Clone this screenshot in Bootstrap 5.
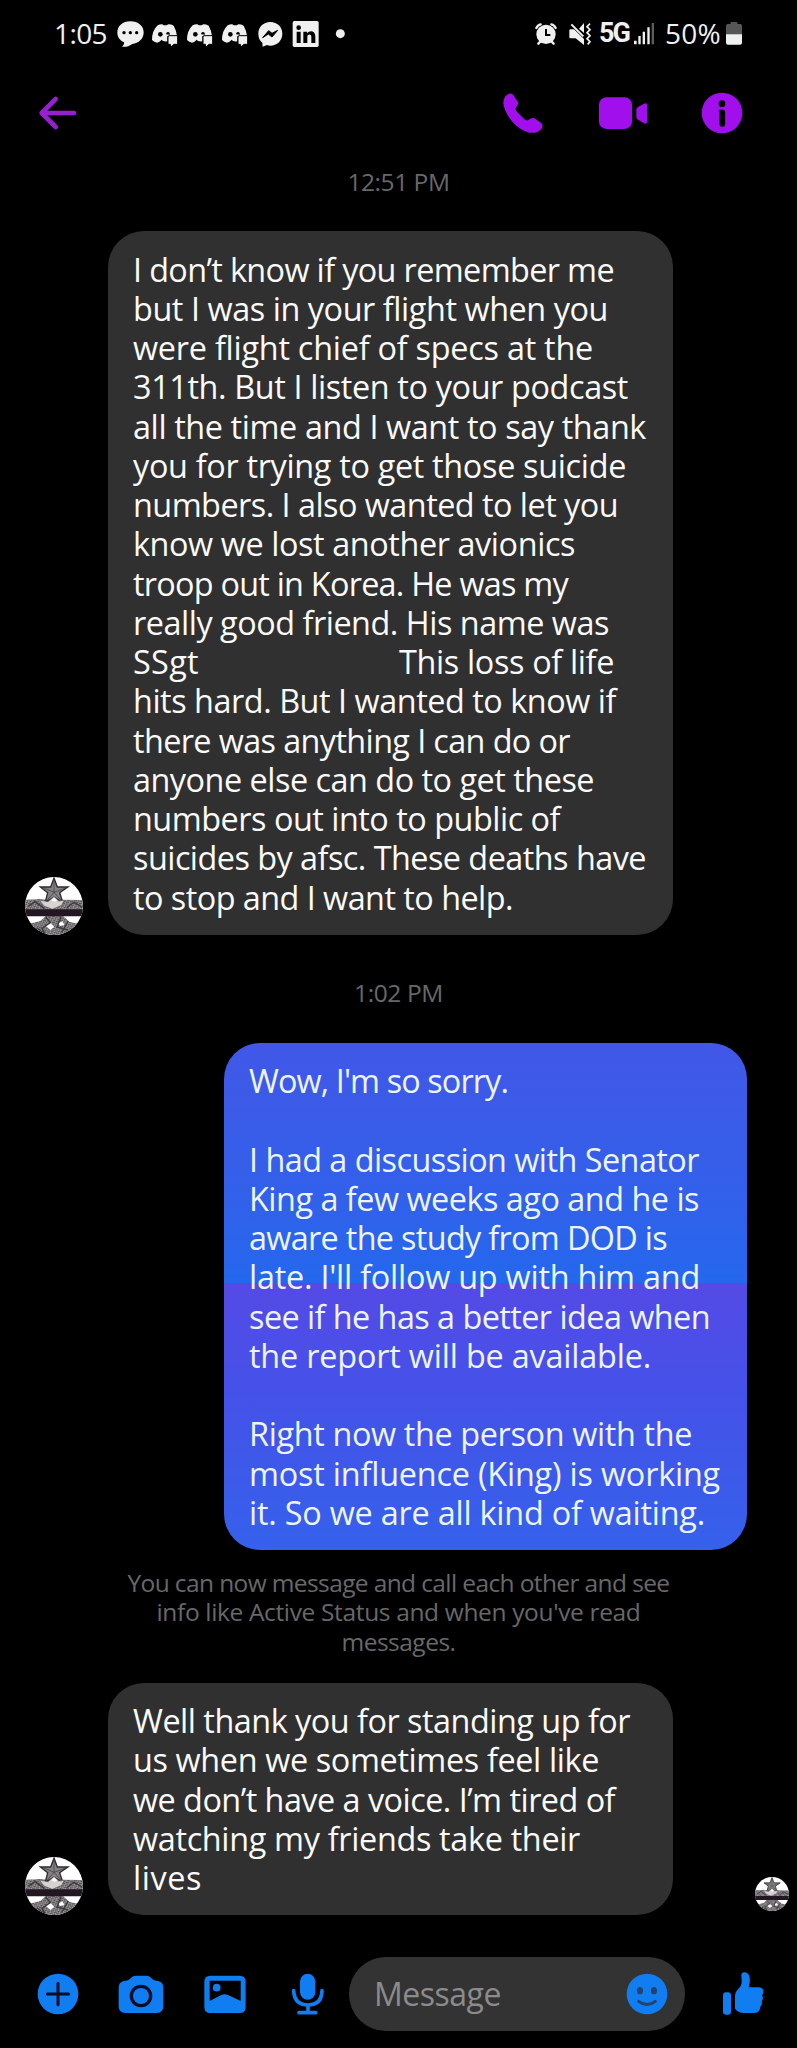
<!DOCTYPE html>
<html lang="en">
<head>
<meta charset="utf-8">
<meta name="viewport" content="width=device-width, initial-scale=1">
<title>Messages</title>
<link href="https://cdn.jsdelivr.net/npm/bootstrap@5.3.0/dist/css/bootstrap.min.css" rel="stylesheet">
<style>
body{background:#000;color:#fafafa;font-family:"Open Sans","Noto Sans",sans-serif;margin:0;overflow:hidden}
.phone{width:797px;height:2048px;overflow:hidden}
svg{display:block;overflow:visible;flex:none}
.ln{display:block;width:max-content;white-space:pre}
.statusbar{height:67px;padding-left:54px;font-size:28px;color:#f0f0f0;line-height:67px}
.statusbar .tray{margin-left:6px}
.net{font-family:Roboto,sans-serif;font-weight:700;font-size:27px}
.topbar{height:93px;padding:22px 51px 23px 34px}
.topbar .calls{gap:51.4px}
.ic{width:48px;height:48px}
.stamp{font-size:24.5px;line-height:29.4px;color:#686868}
.stamp .ln{margin:0 auto}
.t1{margin-top:7px;height:64px}
.bubble{border-radius:36px;padding:18.500px 25px 17.500px;font-size:32.4px;line-height:39.27px}
.theirs{width:564.5px;background:#303030}
.mine{width:523px;margin-left:224px;background:linear-gradient(#4157e7 0,#3161ea 32%,#2368ee 47.4%,#554ae6 47.4%,#4551e8 68%,#3561eb 100%);color:#ecf4ff}
.rowmsg{padding-left:25px}
.pic{width:58px;height:58px;margin-right:25px}
.seen{width:34px;height:34px;margin:0 8px 4px auto}
.redacted{display:inline-block;width:200px}
.t2{height:108px;padding-top:43px}
.note{height:133px;padding-top:18px}
.composer{height:74px;margin-top:42px;padding-left:34px}
.tools{gap:35.3px}
.field{width:336px;height:74px;border-radius:37px;background:#333;color:#8b8b8b;font-size:32px;margin-left:17px;padding:0 14px 0 25px}
.like{margin-left:34px}
</style>
</head>
<body>
<svg width="0" height="0" class="position-absolute">
<defs>
<clipPath id="disc"><circle cx="87" cy="87" r="87"/></clipPath>
<pattern id="hatch" width="9" height="8" patternUnits="userSpaceOnUse" patternTransform="rotate(28)"><rect width="9" height="8" fill="#a9a6a8"/><path d="M0 2h6M4 6h5" stroke="#353135" stroke-width="2.8"/></pattern>
<symbol id="avatar" viewBox="0 0 174 174"><g clip-path="url(#disc)">
<path fill="#fff" d="M0 0h174v174H0z"/>
<path fill="url(#hatch)" d="M0 68l50-2 20 4 36-2 68 1v30H0z"/>
<path fill="url(#hatch)" d="M62 117h52l20 18 40 8v31H0v-30l46-12z"/>
<path fill="#858285" stroke="#2e2b2e" stroke-width="4" d="M87 3l10 27 32 0-25 17 9 28-26-14-26 14 7-28-22-17 31 0z"/>
<path d="M87 6v40M57 33l30 13 36-13M66 70l21-24 22 24" fill="none" stroke="#3b383b" stroke-width="2"/>
<path fill="#d7d3d3" stroke="#5b585b" stroke-width="2" d="M43 69l26 5 18-15 14 13 17-2-8 15-28 12-25-10z"/>
<path fill="#fff" d="M79 70l8-9 10 9-8 4zM62 146l15-8 11 12-12 9zM101 138l12-5 5 11-14 3z"/>
<path d="M10 88l20-14 28 20M125 92l22-16 24 14M62 120l14 17-25 17 10 17M108 120l-12 30 33 9M130 132l-20 34M35 152l24 18" fill="none" stroke="#3b393b" stroke-width="4"/>
<path fill="#211621" d="M0 97h174v21H0z"/>
</g></symbol>
<symbol id="discord" viewBox="450 48 105 105" overflow="visible">
<path fill="#f0f0f0" d="M479 76q8-4 14-3l4 3h9l5-3q9 0 16 4 8 14 10 31h-29v16q-7 1-13-1l-4-4-3 3q-4 4-11 6-9-2-15-8 0-28 17-44z"/>
<circle cx="487" cy="103" r="7"/><path d="M504 103q1-8 7-7 5 1 5 8z"/>
<path fill="#f0f0f0" stroke="#000" stroke-width="3" d="M512 107h27v26h-11l-9 8-2-8h-7v-22z"/>
</symbol>
</defs>
</svg>
<div class="phone d-flex flex-column">
<header>
<div class="statusbar d-flex align-items-center">
<span class="ln" data-w="53">1:05</span>
<div class="tray d-flex">
<svg width="35" height="35" viewBox="342 48 105 105"><path fill="#f0f0f0" d="M394 64c24 0 40 14 40 33 0 20-15 33-34 35-11 8-20 9-31 8 5-4 7-8 6-13-12-6-20-16-20-29 0-20 16-34 39-34z"/><circle cx="375" cy="98" r="5"/><circle cx="394" cy="98" r="5"/><circle cx="413" cy="98" r="5"/></svg>
<svg width="35" height="35"><use href="#discord"/></svg>
<svg width="35" height="35"><use href="#discord"/></svg>
<svg width="35" height="35"><use href="#discord"/></svg>
<svg width="35" height="35" viewBox="761 48 105 105"><path fill="#f0f0f0" d="M813 66c21 0 36 15 36 35 0 21-16 36-36 36q-6 0-10-2l-13 5-1-12c-8-6-12-16-12-27 0-20 15-35 36-35z"/><path d="M790 113l18-21 10 8 17-9-17 20-11-9z" stroke="#000" stroke-width="3" stroke-linejoin="round"/></svg>
<svg width="35" height="35" viewBox="865 48 105 105"><rect x="879" y="63" width="78" height="78" rx="5" fill="#f0f0f0"/><circle cx="897" cy="83" r="7"/><path d="M891 95h12v34h-12zM911 95h11v5c9-11 25-7 25 9v20h-12v-18c0-10-12-9-12 0v18h-12z"/></svg>
<svg width="35" height="35" viewBox="974 48 105 105"><circle cx="1026" cy="101" r="13.5" fill="#f0f0f0"/></svg>
</div>
<svg width="24" height="24" viewBox="414 66 72 72" style="margin-left:176px"><circle cx="450" cy="103" r="29" fill="#f0f0f0"/><path d="M427 131l9-9M473 131l-9-9M421 84q4-9 13-11M479 84q-4-9-13-11" stroke="#f0f0f0" stroke-width="7" stroke-linecap="round" fill="none"/><path d="M450 87v18h13" stroke="#000" stroke-width="6" fill="none"/></svg>
<svg width="24" height="24" viewBox="514 66 72 72" style="margin-left:9.5px"><path fill="#f0f0f0" d="M518 91q0-3 4-3h10l30 29v18l-25-20h-15q-4 0-4-4zM547 86l15-17v30z"/><path d="M524 73l36 36" stroke="#f0f0f0" stroke-width="6"/><path d="M580 71l-9 9 9 9-9 9 9 9-9 9 9 9-7 8" stroke="#f0f0f0" stroke-width="5" fill="none"/></svg>
<span class="ln net" data-w="30" style="margin-left:7.5px">5G</span>
<svg width="20" height="22" viewBox="717 69 60 66" style="margin-left:5px"><path fill="#f0f0f0" d="M717 122h8v11h-8zM730 108h7v25h-7zM743 95h7v38h-7zM757 82h7v51h-7z"/><path fill="#5c5c5c" d="M770 69h7v64h-7z"/></svg>
<span class="ln" data-w="56" style="margin-left:11px">50%</span>
<svg width="16" height="23" viewBox="993 68 48 69" style="margin-left:5px"><path fill="#565656" d="M1007 68h20v6h9q5 0 5 5v27h-48V79q0-5 5-5h9z"/><path fill="#f0f0f0" d="M993 105h48v25q0 6-6 6h-36q-6 0-6-6z"/></svg>
</div>
<div class="topbar d-flex justify-content-between">
<svg class="ic" viewBox="103 268 144 144"><path d="M223 340h-95M168 298l-42 42 42 42" fill="none" stroke="#9420cf" stroke-width="14" stroke-linecap="round" stroke-linejoin="round"/></svg>
<div class="calls d-flex" >
<svg class="ic" viewBox="307 268 144 144"><path fill="#a10fed" d="M327 289q9-11 20-6l17 24q2 6-5 15-5 7 2 14l22 23q7 6 13 1 10-8 18-4l20 15q6 6 1 16-13 15-37 12-26-6-51-33-23-28-27-54-1-14 7-23z"/></svg>
<svg class="ic" viewBox="605 268 144 144"><rect x="605" y="293" width="99" height="95" rx="22" fill="#a10fed"/><path fill="#a10fed" d="M717 329q1-5 6-8l20-10q6-1 6 5v51q0 6-6 5l-20-11q-5-3-6-8z"/></svg>
<svg class="ic" viewBox="904 268 144 144"><circle cx="976" cy="340" r="61" fill="#a10fed"/><circle cx="976" cy="312" r="10"/><path d="M977 339v34" stroke="#000" stroke-width="17" stroke-linecap="round" fill="none"/><path d="M969 333h8" stroke="#000" stroke-width="6" stroke-linecap="round"/></svg>
</div>
</div>
</header>
<main>
<div class="stamp t1"><span class="ln" data-w="102">12:51 PM</span></div>
<div class="rowmsg d-flex align-items-end">
<svg class="pic"><use href="#avatar"/></svg>
<div class="bubble theirs">
<span class="ln" data-w="481">I don’t know if you remember me</span>
<span class="ln" data-w="475">but I was in your flight when you</span>
<span class="ln" data-w="460">were flight chief of specs at the</span>
<span class="ln" data-w="495">311th. But I listen to your podcast</span>
<span class="ln" data-w="513">all the time and I want to say thank</span>
<span class="ln" data-w="493">you for trying to get those suicide</span>
<span class="ln" data-w="485">numbers. I also wanted to let you</span>
<span class="ln" data-w="442">know we lost another avionics</span>
<span class="ln" data-w="435">troop out in Korea. He was my</span>
<span class="ln" data-w="476">really good friend. His name was</span>
<div class="d-flex"><span class="ln" data-w="66">SSgt</span><span class="redacted"></span><span class="ln" data-w="215">This loss of life</span></div>
<span class="ln" data-w="483">hits hard. But I wanted to know if</span>
<span class="ln" data-w="437">there was anything I can do or</span>
<span class="ln" data-w="461">anyone else can do to get these</span>
<span class="ln" data-w="427">numbers out into to public of</span>
<span class="ln" data-w="513">suicides by afsc. These deaths have</span>
<span class="ln" data-w="380">to stop and I want to help.</span>
</div>
</div>
<div class="stamp t2"><span class="ln" data-w="89">1:02 PM</span></div>
<div class="bubble mine">
<span class="ln" data-w="259">Wow, I'm so sorry.</span>
<br>
<span class="ln" data-w="450">I had a discussion with Senator</span>
<span class="ln" data-w="450">King a few weeks ago and he is</span>
<span class="ln" data-w="418">aware the study from DOD is</span>
<span class="ln" data-w="451">late. I'll follow up with him and</span>
<span class="ln" data-w="461">see if he has a better idea when</span>
<span class="ln" data-w="402">the report will be available.</span>
<br>
<span class="ln" data-w="443">Right now the person with the</span>
<span class="ln" data-w="471">most influence (King) is working</span>
<span class="ln" data-w="456">it. So we are all kind of waiting.</span>
</div>
<div class="stamp note">
<span class="ln" data-w="542">You can now message and call each other and see</span>
<span class="ln" data-w="484">info like Active Status and when you've read</span>
<span class="ln" data-w="114">messages.</span>
</div>
<div class="rowmsg d-flex align-items-end">
<svg class="pic"><use href="#avatar"/></svg>
<div class="bubble theirs">
<span class="ln" data-w="497">Well thank you for standing up for</span>
<span class="ln" data-w="466">us when we sometimes feel like</span>
<span class="ln" data-w="482">we don’t have a voice. I’m tired of</span>
<span class="ln" data-w="447">watching my friends take their</span>
<span class="ln" data-w="69">lives</span>
</div>
<svg class="seen"><use href="#avatar"/></svg>
</div>
</main>
<footer class="composer d-flex align-items-center">
<div class="tools d-flex">
<svg class="ic" viewBox="102 390 144 144"><circle cx="174" cy="462" r="61" fill="#107df0"/><path d="M142 462h64M174 430v64" stroke="#000f26" stroke-width="9" stroke-linecap="round"/></svg>
<svg class="ic" viewBox="352 390 144 144"><path fill="#107df0" d="M377 422q9 0 14-6 8-9 16-9h35q8 0 15 9 5 6 14 6 20 2 20 21v56q0 20-20 20h-94q-20 0-20-20v-56q0-19 20-21z"/><circle cx="424" cy="468" r="29" fill="none" stroke="#000f26" stroke-width="10"/></svg>
<svg class="ic" viewBox="601 390 144 144"><path fill="#107df0" fill-rule="evenodd" d="M629 407h88q18 0 18 18v76q0 18-18 18h-88q-18 0-18-18v-76q0-18 18-18zM627 422v61l30-16q15-9 30 0l33 16v-61z"/><circle cx="648" cy="443" r="11.500" fill="#107df0"/></svg>
<svg class="ic" viewBox="851 390 144 144"><rect x="899" y="401" width="46" height="78" rx="23" fill="#107df0"/><path d="M880 452q2 43 43 43t42-43M923 495v22M896 518h50" fill="none" stroke="#107df0" stroke-width="11" stroke-linecap="round"/></svg>
</div>
<div class="field d-flex align-items-center justify-content-between"><span class="ln" data-w="127">Message</span>
<svg class="ic" viewBox="679 390 144 144"><circle cx="751" cy="462" r="61" fill="#107df0"/><ellipse cx="730" cy="452" rx="9" ry="11" fill="#24426b"/><ellipse cx="772" cy="452" rx="9" ry="11" fill="#24426b"/><path d="M726 484q25 19 50 0" fill="none" stroke="#24426b" stroke-width="9" stroke-linecap="round"/></svg></div>
<svg class="ic like" viewBox="965 390 144 144"><rect x="977" y="457" width="24" height="67" rx="9" fill="#107df0"/><path fill="#107df0" d="M1032 405q1-9 10-8 12 1 15 16 2 15-3 29h31q14 1 13 15 0 6-4 9 6 9-1 18 3 9-4 16-1 18-18 19h-30q-18 0-28-13V466q0-10 9-18 12-12 11-25z"/></svg>
</footer>
</div>
<script src="https://cdn.jsdelivr.net/npm/bootstrap@5.3.0/dist/js/bootstrap.bundle.min.js"></script>
<script>
// Track each line so that it fills its measure.
document.querySelectorAll('[data-w]').forEach(function (el) {
  var gap = (el.dataset.w - el.getBoundingClientRect().width) / el.textContent.length;
  el.style.letterSpacing = gap.toFixed(3) + 'px';
});
</script>
</body>
</html>
